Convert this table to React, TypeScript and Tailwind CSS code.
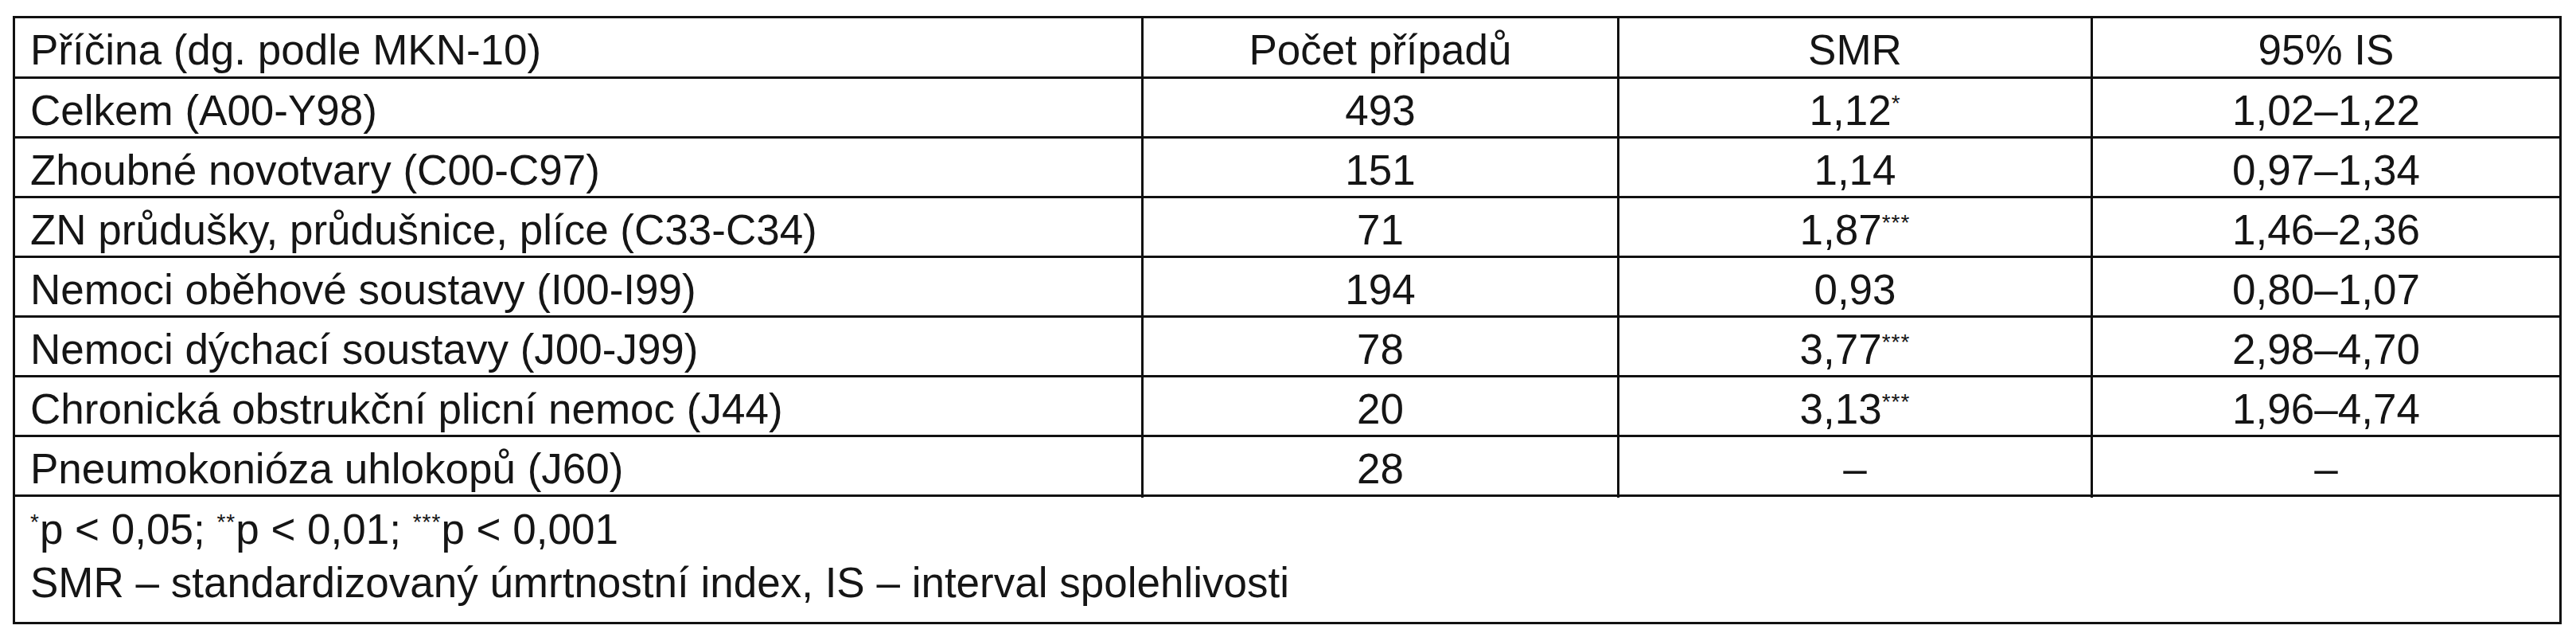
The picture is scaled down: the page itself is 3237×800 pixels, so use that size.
import React from "react";

type Row = { cause: string; count: string; smr: string; sig?: string; ci: string };

const rows: Row[] = [
  { cause: "Celkem (A00-Y98)", count: "493", smr: "1,12", sig: "*", ci: "1,02–1,22" },
  { cause: "Zhoubné novotvary (C00-C97)", count: "151", smr: "1,14", ci: "0,97–1,34" },
  { cause: "ZN průdušky, průdušnice, plíce (C33-C34)", count: "71", smr: "1,87", sig: "***", ci: "1,46–2,36" },
  { cause: "Nemoci oběhové soustavy (I00-I99)", count: "194", smr: "0,93", ci: "0,80–1,07" },
  { cause: "Nemoci dýchací soustavy (J00-J99)", count: "78", smr: "3,77", sig: "***", ci: "2,98–4,70" },
  { cause: "Chronická obstrukční plicní nemoc (J44)", count: "20", smr: "3,13", sig: "***", ci: "1,96–4,74" },
  { cause: "Pneumokonióza uhlokopů (J60)", count: "28", smr: "–", ci: "–" },
];

function Sup({ children }: { children: React.ReactNode }) {
  return (
    <span className="relative -top-[18px] text-[28px] leading-none tracking-[1px]">{children}</span>
  );
}

const grid = "grid grid-cols-[1415px_598px_595px_589px] border-b-[3px] border-[#111]";
const first = "flex items-center pl-[19px] whitespace-nowrap";
const cell = "flex items-center justify-center border-l-[3px] border-[#111] whitespace-nowrap";

export default function App() {
  return (
    <div className="w-[3237px] h-[800px] bg-white pt-[20px] pl-[16px] text-[#151515] text-[53px] font-['Liberation_Sans',Arial,sans-serif]">
      <div className="w-[3203px] border-[3px] border-[#111]">
        <div className={`${grid} h-[76px] leading-[73px]`}>
          <div className={`${first} pt-[3px]`}>Příčina (dg. podle MKN-10)</div>
          <div className={`${cell} pt-[3px]`}>Počet případů</div>
          <div className={`${cell} pt-[3px]`}>SMR</div>
          <div className={`${cell} pt-[3px]`}>95% IS</div>
        </div>
        {rows.map((r) => (
          <div key={r.cause} className={`${grid} h-[75px] leading-[72px]`}>
            <div className={`${first} pt-[4px]`}>{r.cause}</div>
            <div className={`${cell} pt-[4px]`}>{r.count}</div>
            <div className={`${cell} pt-[4px]`}>
              <span>
                {r.smr}
                {r.sig && <Sup>{r.sig}</Sup>}
              </span>
            </div>
            <div className={`${cell} pt-[4px]`}>{r.ci}</div>
          </div>
        ))}
        <div className="pl-[19px] pt-[7px] pb-[16px] leading-[67px] whitespace-nowrap">
          <div>
            <Sup>*</Sup>p &lt; 0,05; <Sup>**</Sup>p &lt; 0,01; <Sup>***</Sup>p &lt; 0,001
          </div>
          <div>SMR – standardizovaný úmrtnostní index, IS – interval spolehlivosti</div>
        </div>
      </div>
    </div>
  );
}
